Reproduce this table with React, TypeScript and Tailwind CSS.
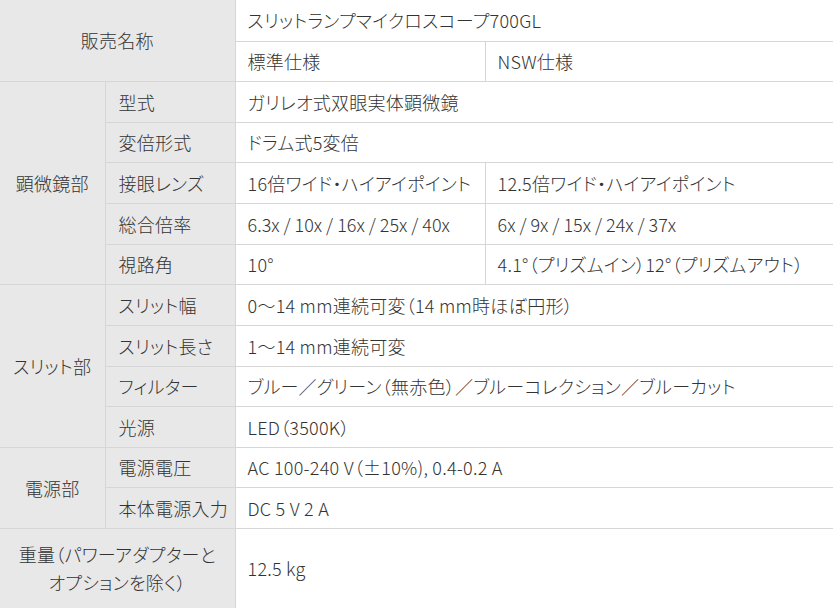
import React from "react";

const H = "bg-[#e8e8e8]";
const B = "border-[#d6d6d6]";

export default function App() {
  const font = {
    fontFamily: '"Noto Sans CJK JP", "Noto Sans", sans-serif',
    fontFeatureSettings: '"palt"',
  } as React.CSSProperties;
  const th = `${H} border-b border-r ${B} font-light text-[#333] align-middle`;
  const td = `bg-white border-b ${B} font-light text-[#333] align-middle pl-3`;
  return (
    <div className="w-[833px] h-[608px] bg-white overflow-hidden" style={font}>
      <table className="w-[833px] table-fixed border-collapse text-[18px] leading-[26px] tracking-[0.25px]">
        <colgroup>
          <col className="w-[105px]" />
          <col className="w-[130px]" />
          <col className="w-[250px]" />
          <col className="w-[348px]" />
        </colgroup>
        <tbody>
          <tr className="h-[41px]">
            <th colSpan={2} rowSpan={2} className={`${th} text-center`}>販売名称</th>
            <td colSpan={2} className={td}>スリットランプマイクロスコープ700GL</td>
          </tr>
          <tr className="h-[40px]">
            <td className={`${td} border-r`}>標準仕様</td>
            <td className={td}>NSW仕様</td>
          </tr>
          <tr className="h-[41px]">
            <th rowSpan={5} className={`${th} text-center`}>顕微鏡部</th>
            <th className={`${th} text-left pl-[13px]`}>型式</th>
            <td colSpan={2} className={td}>ガリレオ式双眼実体顕微鏡</td>
          </tr>
          <tr className="h-[40px]">
            <th className={`${th} text-left pl-[13px]`}>変倍形式</th>
            <td colSpan={2} className={td}>ドラム式5変倍</td>
          </tr>
          <tr className="h-[41px]">
            <th className={`${th} text-left pl-[13px]`}>接眼レンズ</th>
            <td className={`${td} border-r`}>16倍ワイド・ハイアイポイント</td>
            <td className={td}>12.5倍ワイド・ハイアイポイント</td>
          </tr>
          <tr className="h-[41px]">
            <th className={`${th} text-left pl-[13px]`}>総合倍率</th>
            <td className={`${td} border-r tracking-normal`}>6.3x / 10x / 16x / 25x / 40x</td>
            <td className={`${td} tracking-normal`}>6x / 9x / 15x / 24x / 37x</td>
          </tr>
          <tr className="h-[40px]">
            <th className={`${th} text-left pl-[13px]`}>視路角</th>
            <td className={`${td} border-r`}>10°</td>
            <td className={td}>4.1°（プリズムイン）12°（プリズムアウト）</td>
          </tr>
          <tr className="h-[41px]">
            <th rowSpan={4} className={`${th} text-center`}>スリット部</th>
            <th className={`${th} text-left pl-[13px]`}>スリット幅</th>
            <td colSpan={2} className={td}>0〜14 mm連続可変（14 mm時ほぼ円形）</td>
          </tr>
          <tr className="h-[41px]">
            <th className={`${th} text-left pl-[13px]`}>スリット長さ</th>
            <td colSpan={2} className={td}>1〜14 mm連続可変</td>
          </tr>
          <tr className="h-[40px]">
            <th className={`${th} text-left pl-[13px]`}>フィルター</th>
            <td colSpan={2} className={td}>ブルー／グリーン（無赤色）／ブルーコレクション／ブルーカット</td>
          </tr>
          <tr className="h-[41px]">
            <th className={`${th} text-left pl-[13px]`}>光源</th>
            <td colSpan={2} className={td}>LED（3500K）</td>
          </tr>
          <tr className="h-[40px]">
            <th rowSpan={2} className={`${th} text-center`}>電源部</th>
            <th className={`${th} text-left pl-[13px]`}>電源電圧</th>
            <td colSpan={2} className={td}>AC 100-240 V（±10%), 0.4-0.2 A</td>
          </tr>
          <tr className="h-[41px]">
            <th className={`${th} text-left pl-[13px]`}>本体電源入力</th>
            <td colSpan={2} className={td}>DC 5 V 2 A</td>
          </tr>
          <tr className="h-[80px]">
            <th colSpan={2} className={`${H} border-r ${B} font-light text-[#333] align-middle text-center leading-[28px]`}>
              重量（パワーアダプターと
              <br />
              オプションを除く）
            </th>
            <td colSpan={2} className={`bg-white font-light text-[#333] align-middle pl-3`}>12.5 kg</td>
          </tr>
        </tbody>
      </table>
    </div>
  );
}
